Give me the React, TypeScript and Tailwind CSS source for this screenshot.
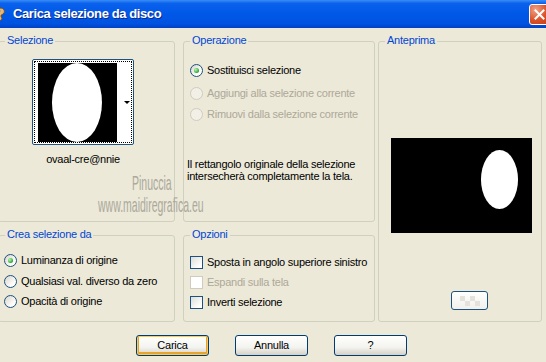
import React from "react";
import clsx from "clsx";

const font = "font-['Liberation_Sans',Arial,sans-serif]";

function Radio({ checked, disabled }: { checked?: boolean; disabled?: boolean }) {
  return (
    <span
      className={clsx(
        "flex h-[13px] w-[13px] shrink-0 items-center justify-center rounded-full border",
        disabled
          ? "border-[#CFCCBF] bg-[#F2F0E6]"
          : "border-[#1C5180] bg-[linear-gradient(135deg,#D8D5C8,#FFFFFF_75%)]"
      )}
    >
      {checked && (
        <span className="h-[5px] w-[5px] rounded-full bg-[radial-gradient(circle_at_35%_35%,#B8F5B8,#21A121_75%)]" />
      )}
    </span>
  );
}

function Check({ disabled }: { disabled?: boolean }) {
  return (
    <span
      className={clsx(
        "h-[13px] w-[13px] shrink-0 border",
        disabled ? "border-[#CFCCBF] bg-white" : "border-[#1C5180] bg-[linear-gradient(135deg,#DCDCD7,#FFFFFF_80%)]"
      )}
    />
  );
}

function Option({
  kind,
  label,
  checked,
  disabled,
  className,
}: {
  kind: "radio" | "check";
  label: string;
  checked?: boolean;
  disabled?: boolean;
  className?: string;
}) {
  return (
    <div className={clsx("flex h-[13px] items-center gap-[4px]", className)}>
      {kind === "radio" ? <Radio checked={checked} disabled={disabled} /> : <Check disabled={disabled} />}
      <span className={clsx("whitespace-nowrap leading-[13px]", disabled ? "text-[#ACA899]" : "text-black")}>{label}</span>
    </div>
  );
}

function GroupBox({ label, className, children }: { label: string; className?: string; children?: React.ReactNode }) {
  return (
    <div className={clsx("relative rounded-[3px] border border-[#D0D0BF]", className)}>
      <span className="absolute -top-[8px] left-[6px] bg-[#ECE9D8] px-[2px] leading-[13px] text-[#0046D5]">{label}</span>
      {children}
    </div>
  );
}

function Button({ children, isDefault }: { children: React.ReactNode; isDefault?: boolean }) {
  return (
    <div
      className={clsx(
        "flex h-[21px] w-[73px] items-center justify-center rounded-[3px] border border-[#003C74] bg-[linear-gradient(180deg,#FFFFFF,#F3F3EF_60%,#D6D0C5)] text-black",
        isDefault && "shadow-[inset_0_0_0_1px_#F9C85F,inset_0_-1px_0_2px_#E8A42A]"
      )}
    >
      {children}
    </div>
  );
}

export default function App() {
  return (
    <div className={clsx("relative h-[362px] w-[546px] overflow-hidden bg-[#ECE9D8] text-[11px] tracking-[-0.25px]", font)}>
      {/* barra del titolo */}
      <div className="flex h-[28px] items-center justify-between bg-[linear-gradient(180deg,#3A8DF5_0%,#0A61EC_12%,#0058E8_50%,#0052E0_85%,#0041C4_100%)]">
        <div className="flex items-center gap-[7px]">
          <svg width="16" height="16" viewBox="0 0 16 16" className="-ml-[10px]">
            <path d="M2 8c0-4 4-6 8-6s5 3 4 5-3 1-3 3 2 2 0 4-9 2-9-6z" fill="#E7B977" stroke="#7A4A1A" strokeWidth="1" />
            <circle cx="6" cy="6" r="1.3" fill="#E02020" />
            <circle cx="9" cy="5" r="1.3" fill="#2050E0" />
            <circle cx="5" cy="10" r="1.3" fill="#20A020" />
          </svg>
          <span className="text-[13px] font-bold tracking-[-0.4px] text-white [text-shadow:1px_1px_0_#0C2A8C]">
            Carica selezione da disco
          </span>
        </div>
        <div className="-mr-[4px] flex h-[21px] w-[21px] items-center justify-center rounded-[3px] border border-white bg-[radial-gradient(circle_at_30%_25%,#F0A286,#DA5129_55%,#C33C12)]">
          <svg width="11" height="11" viewBox="0 0 11 11">
            <path d="M1.5 1.5l8 8M9.5 1.5l-8 8" stroke="white" strokeWidth="2" strokeLinecap="square" />
          </svg>
        </div>
      </div>

      <div className="-ml-[2px] mt-[13px] grid grid-cols-[177px_200px_167px] grid-rows-[181px_87px] gap-y-[13px]">
        {/* Selezione */}
        <GroupBox label="Selezione" className="col-start-1 row-start-1 pl-[33px] pt-[17px]">
          <div className="w-[102px]">
            <div className="h-[86px] rounded-[2px] border border-[#1C5180] bg-white p-[1px]">
              <div className="flex h-full items-center border border-dotted border-black">
                <div className="ml-[3px] flex h-[79px] w-[79px] bg-black pl-[14px]">
                  <div className="h-full w-[50px] rounded-[50%] bg-white" />
                </div>
                <div className="ml-[7px] h-0 w-0 border-x-[3px] border-t-[3px] border-x-transparent border-t-black" />
              </div>
            </div>
            <div className="mt-[8px] text-center leading-[13px] text-black">ovaal-cre@nnie</div>
          </div>
        </GroupBox>

        {/* Operazione */}
        <GroupBox label="Operazione" className="col-start-2 row-start-1 ml-[8px] pt-[22px]">
          <Option kind="radio" label="Sostituisci selezione" checked className="pl-[6px]" />
          <Option kind="radio" label="Aggiungi alla selezione corrente" disabled className="mt-[10px] pl-[6px]" />
          <Option kind="radio" label="Rimuovi dalla selezione corrente" disabled className="mt-[8px] pl-[6px]" />
          <p className="mt-[37px] pl-[3px] leading-[12px] text-black">
            Il rettangolo originale della selezione
            <br />
            intersecherà completamente la tela.
          </p>
        </GroupBox>

        {/* Anteprima */}
        <GroupBox label="Anteprima" className="col-start-3 row-span-2 row-start-1 ml-[3px]">
          <div className="ml-[12px] mt-[96px] h-[95px] w-[141px] bg-black pl-[90px] pt-[12px]">
            <div className="h-[59px] w-[37px] rounded-[50%] bg-white" />
          </div>
          <div className="ml-[72px] mt-[58px] flex h-[19px] w-[37px] items-center justify-center rounded-[3px] border border-[#1C5180] bg-[linear-gradient(180deg,#FFFFFF,#F1F0EC)]">
            <svg width="20" height="10" viewBox="0 0 20 10">
              <rect x="0" y="0" width="5" height="5" fill="#E4E2DA" />
              <rect x="10" y="0" width="5" height="5" fill="#E4E2DA" />
              <rect x="5" y="5" width="5" height="5" fill="#E4E2DA" />
              <rect x="15" y="5" width="5" height="5" fill="#E4E2DA" />
            </svg>
          </div>
        </GroupBox>

        {/* Crea selezione da */}
        <GroupBox label="Crea selezione da" className="col-start-1 row-start-2 pl-[5px] pt-[18px]">
          <Option kind="radio" label="Luminanza di origine" checked />
          <Option kind="radio" label="Qualsiasi val. diverso da zero" className="mt-[8px]" />
          <Option kind="radio" label="Opacità di origine" className="mt-[7px]" />
        </GroupBox>

        {/* Opzioni */}
        <GroupBox label="Opzioni" className="col-start-2 row-start-2 ml-[8px] pl-[6px] pt-[20px]">
          <Option kind="check" label="Sposta in angolo superiore sinistro" />
          <Option kind="check" label="Espandi sulla tela" disabled className="mt-[7px]" />
          <Option kind="check" label="Inverti selezione" className="mt-[7px]" />
        </GroupBox>
      </div>

      {/* pulsanti */}
      <div className="mt-[13px] flex gap-[26px] pl-[136px]">
        <Button isDefault>Carica</Button>
        <Button>Annulla</Button>
        <Button>?</Button>
      </div>

      {/* filigrana */}
      <div className="pointer-events-none absolute left-[132px] top-[172px] origin-left scale-x-50 text-[21px] leading-[21px] tracking-normal text-[#ABA89C]">
        Pinuccia
      </div>
      <div className="pointer-events-none absolute left-[98px] top-[194px] origin-left scale-x-50 whitespace-nowrap text-[21px] leading-[21px] tracking-normal text-[#ABA89C]">
        www.maidiregrafica.eu
      </div>
    </div>
  );
}
